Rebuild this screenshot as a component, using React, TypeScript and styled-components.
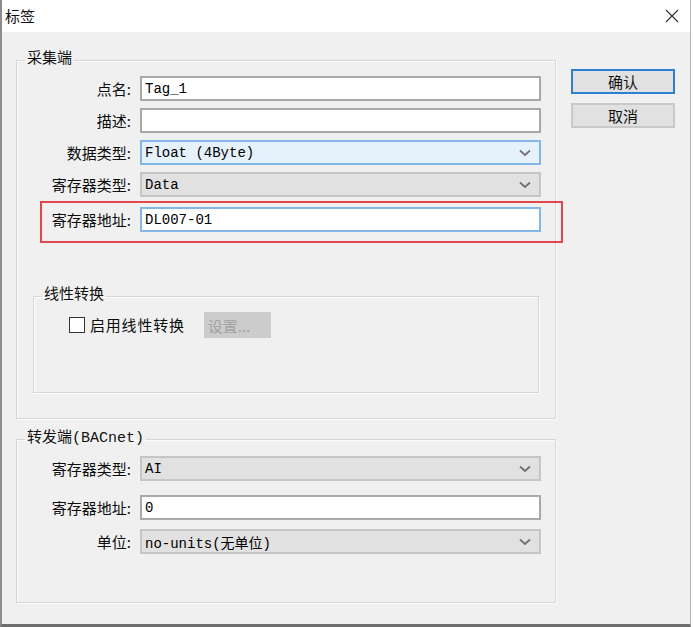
import React from "react";
import styled, { createGlobalStyle } from "styled-components";

const GlobalStyle = createGlobalStyle`
  html, body { margin: 0; padding: 0; background: #ffffff; }
  body { font-family: "Noto Sans CJK SC", "Noto Sans", sans-serif; color: #111; }
  * { box-sizing: border-box; }
`;

const Window = styled.div`
  width: 691px;
  height: 627px;
  display: flex;
  flex-direction: column;
  background: #f0f0f0;
  border-left: 2px solid #8c8c8c;
  border-right: 1px solid #b8b8b8;
  border-bottom: 3px solid #6e6e6e;
`;

const TitleBar = styled.div`
  height: 32px;
  flex: none;
  background: #ffffff;
  display: flex;
  align-items: center;
  justify-content: space-between;
  padding: 0 11px 0 3px;
`;

const Title = styled.span`
  font-size: 15px;
  line-height: 20px;
  color: #111;
`;

const Body = styled.div`
  display: flex;
  align-items: flex-start;
  gap: 15px;
  padding: 18px 0 0 14px;
`;

const LeftColumn = styled.div`
  width: 540px;
  display: flex;
  flex-direction: column;
  gap: 10px;
`;

const RightColumn = styled.div`
  display: flex;
  flex-direction: column;
  gap: 9px;
  padding-top: 19px;
`;

const DialogButton = styled.button<{ $default?: boolean }>`
  width: 104px;
  height: 25px;
  background: #e1e1e1;
  border: 2px solid ${(p) => (p.$default ? "#2f7fd0" : "#c9c9c9")};
  font-family: "Noto Sans CJK SC", sans-serif;
  font-size: 15px;
  line-height: 19px;
  color: #111;
  padding: 0;
`;

const Group = styled.fieldset<{ $pt: number; $pb: number; $ml?: number; $mr?: number; $mt?: number }>`
  margin: ${(p) => `${p.$mt ?? 0}px ${p.$mr ?? 0}px 0 ${p.$ml ?? 0}px`};
  padding: ${(p) => `${p.$pt}px 14px ${p.$pb}px 0`};
  border: 1px solid #d6d6d6;
  box-shadow: inset 1px 1px 0 #fbfbfb, 1px 1px 0 #fbfbfb;
  min-inline-size: 0;
`;

const Legend = styled.legend`
  margin-left: 8px;
  padding: 0 2px;
  font-family: "Liberation Mono", "Noto Sans CJK SC", monospace;
  font-size: 15px;
  line-height: 20px;
  color: #111;
`;

const Rows = styled.div`
  display: flex;
  flex-direction: column;
  gap: 7px;
`;

const FieldRow = styled.div<{ $mt?: number }>`
  display: grid;
  grid-template-columns: 116px 401px;
  column-gap: 7px;
  align-items: center;
  margin-top: ${(p) => p.$mt ?? 0}px;
`;

const HighlightRow = styled(FieldRow)`
  position: relative;
  &::after {
    content: "";
    position: absolute;
    left: 23px;
    right: -22px;
    top: -6px;
    bottom: -11px;
    border: 2px solid #e2474b;
    pointer-events: none;
  }
`;

const Label = styled.label`
  text-align: right;
  font-size: 15px;
  line-height: 20px;
  white-space: nowrap;
  color: #0c0c0c;
  padding-right: 2px;
`;

const Box = styled.div<{ $tone: "plain" | "focus" | "disabled" | "focusfill" }>`
  height: 25px;
  display: flex;
  align-items: center;
  justify-content: space-between;
  padding: 0 8px 0 3px;
  font-family: "Liberation Mono", "Noto Sans CJK SC", monospace;
  font-size: 14px;
  color: #000;
  white-space: nowrap;
  border: 2px solid
    ${(p) =>
      p.$tone === "focus" || p.$tone === "focusfill"
        ? "#84b6e6"
        : p.$tone === "disabled"
        ? "#c6c6c6"
        : "#a9a9a9"};
  background: ${(p) =>
    p.$tone === "focusfill" ? "#e5f1fb" : p.$tone === "disabled" ? "#e1e1e1" : "#ffffff"};
`;

const CheckRow = styled.div`
  display: flex;
  align-items: center;
  padding-left: 35px;
`;

const CheckBox = styled.span`
  width: 16px;
  height: 16px;
  border: 1px solid #333;
  background: #fff;
  flex: none;
`;

const CheckLabel = styled.span`
  margin-left: 5px;
  font-size: 15px;
  line-height: 20px;
  letter-spacing: 0.8px;
  color: #0c0c0c;
`;

const SetButton = styled.button`
  margin-left: 19px;
  width: 67px;
  height: 26px;
  border: none;
  background: #cccccc;
  color: #a3a3a3;
  font-family: "Noto Sans CJK SC", sans-serif;
  font-size: 15px;
  padding: 0 0 0 4px;
  text-align: left;
`;

const Chevron = () => (
  <svg width="12" height="8" viewBox="0 0 12 8">
    <polyline points="1,1.5 6,6 11,1.5" fill="none" stroke="#707070" strokeWidth="1.7" />
  </svg>
);

const CloseIcon = () => (
  <svg width="14" height="14" viewBox="0 0 14 14">
    <path d="M1 1 L13 13 M13 1 L1 13" stroke="#333" strokeWidth="1.1" fill="none" />
  </svg>
);

type Field = {
  label: string;
  value: string;
  tone: "plain" | "focus" | "disabled" | "focusfill";
  select?: boolean;
  mt?: number;
};

const Input = ({ f }: { f: Field }) => (
  <Box $tone={f.tone}>
    <span>{f.value}</span>
    {f.select && <Chevron />}
  </Box>
);

const collectFields: Field[] = [
  { label: "点名:", value: "Tag_1", tone: "plain" },
  { label: "描述:", value: "", tone: "plain" },
  { label: "数据类型:", value: "Float (4Byte)", tone: "focusfill", select: true },
  { label: "寄存器类型:", value: "Data", tone: "disabled", select: true },
];

const forwardFields: Field[] = [
  { label: "寄存器类型:", value: "AI", tone: "disabled", select: true },
  { label: "寄存器地址:", value: "0", tone: "plain", mt: 14 },
  { label: "单位:", value: "no-units(无单位)", tone: "disabled", select: true, mt: 9 },
];

export default function App() {
  return (
    <>
      <GlobalStyle />
      <Window>
        <TitleBar>
          <Title>标签</Title>
          <CloseIcon />
        </TitleBar>
        <Body>
          <LeftColumn>
            <Group $pt={6} $pb={25}>
              <Legend>采集端</Legend>
              <Rows>
                {collectFields.map((f) => (
                  <FieldRow key={f.label}>
                    <Label>{f.label}</Label>
                    <Input f={f} />
                  </FieldRow>
                ))}
                <HighlightRow $mt={3}>
                  <Label>寄存器地址:</Label>
                  <Input f={{ label: "", value: "DL007-01", tone: "focus" }} />
                </HighlightRow>
              </Rows>
              <Group $pt={6} $pb={54} $ml={16} $mr={2} $mt={54}>
                <Legend>线性转换</Legend>
                <CheckRow>
                  <CheckBox />
                  <CheckLabel>启用线性转换</CheckLabel>
                  <SetButton disabled>设置...</SetButton>
                </CheckRow>
              </Group>
            </Group>
            <Group $pt={7} $pb={48}>
              <Legend>转发端(BACnet)</Legend>
              {forwardFields.map((f) => (
                <FieldRow key={f.label} $mt={f.mt}>
                  <Label>{f.label}</Label>
                  <Input f={f} />
                </FieldRow>
              ))}
            </Group>
          </LeftColumn>
          <RightColumn>
            <DialogButton $default>确认</DialogButton>
            <DialogButton>取消</DialogButton>
          </RightColumn>
        </Body>
      </Window>
    </>
  );
}
